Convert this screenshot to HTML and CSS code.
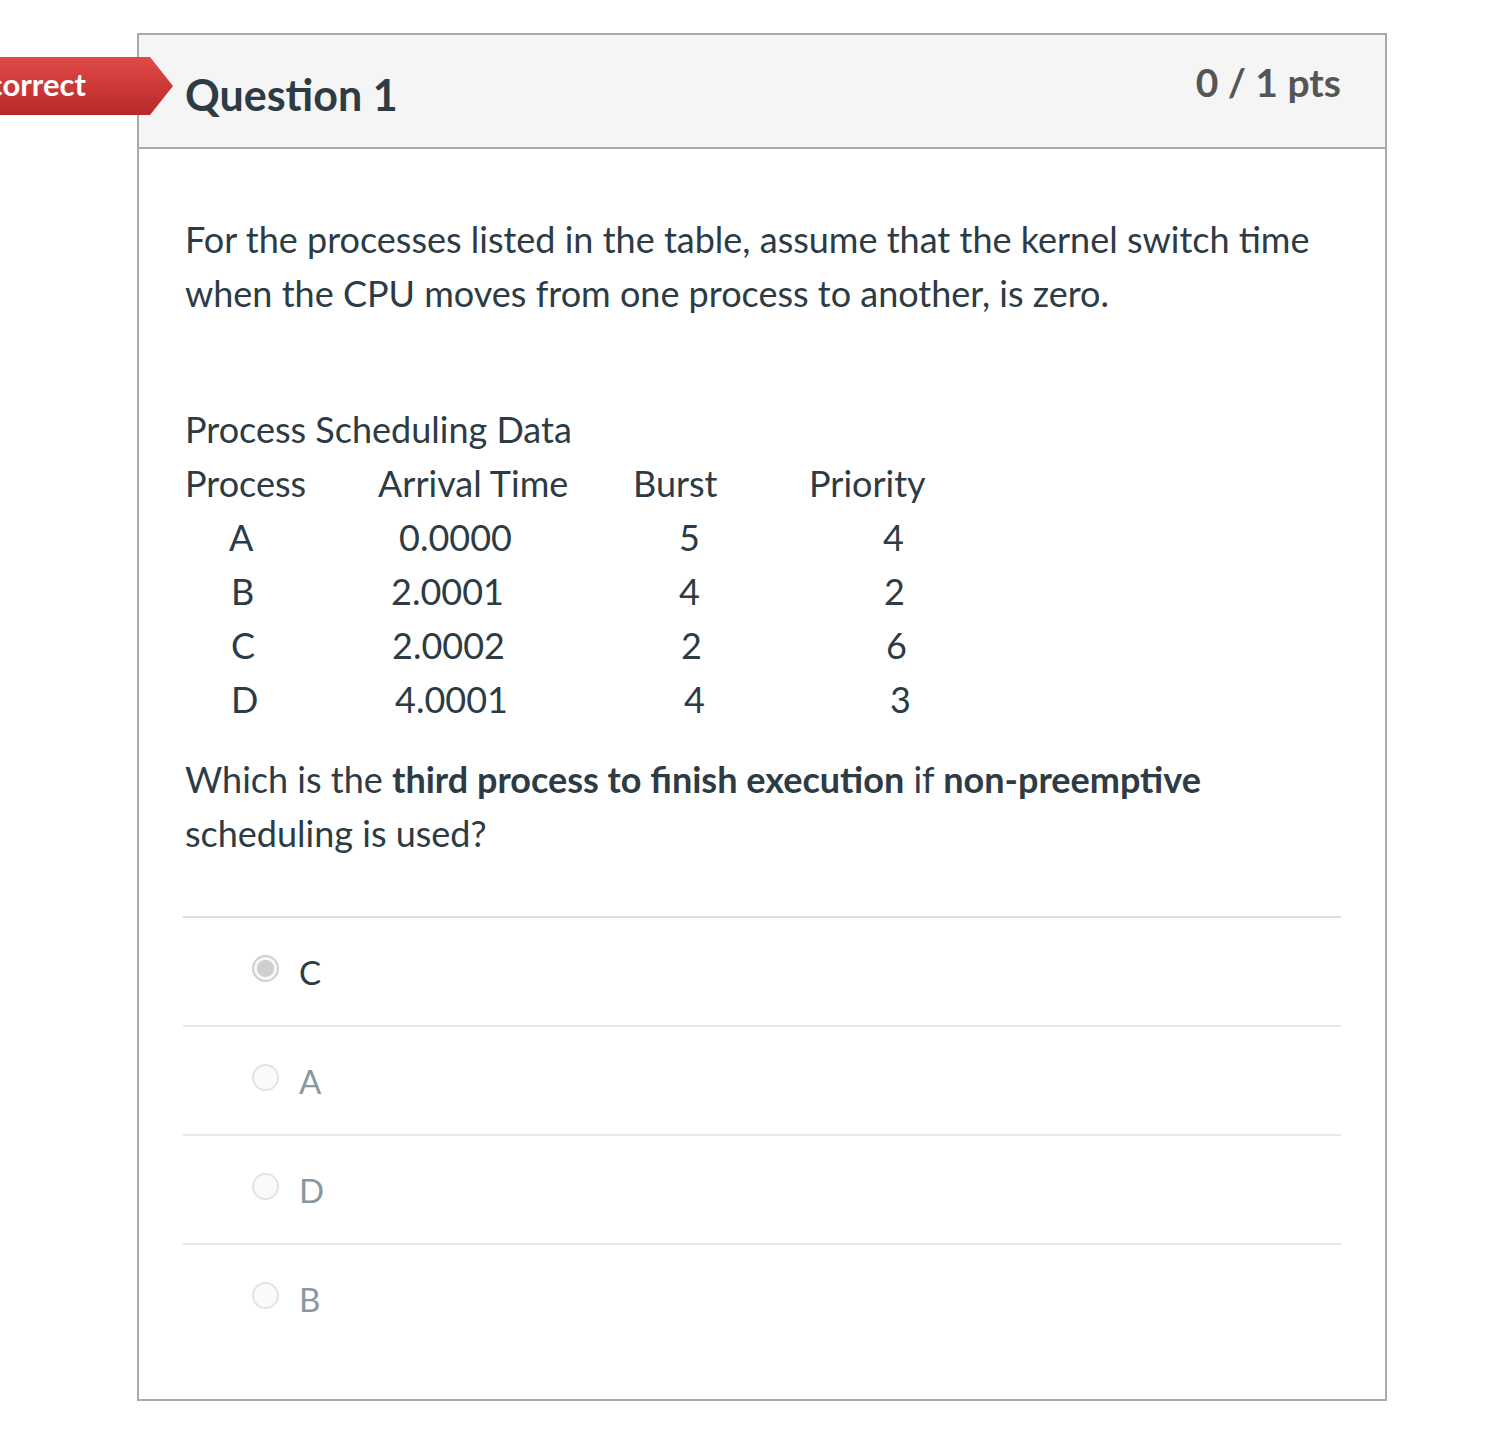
FILE: index.html
```html
<!DOCTYPE html>
<html lang="en">
<head>
<meta charset="utf-8">
<title>Question 1</title>
<link rel="stylesheet" href="styles.css">
</head>
<body>
<div class="page">
  <div class="badge"><span>Incorrect</span></div>
  <div class="card">
    <div class="card-header">
      <h2 class="title">Question 1</h2>
      <div class="pts">0 / 1 pts</div>
    </div>
    <div class="card-body">
      <p class="intro">For the processes listed in the table, assume that the kernel switch time when the CPU moves from one process to another, is zero.</p>
      <div class="caption">Process Scheduling Data</div>
      <div class="sched">
        <div class="h">Process</div><div class="h">Arrival Time</div><div class="h">Burst</div><div class="h">Priority</div>
        <div class="c1">A</div><div class="c2 a0">0.0000</div><div class="c3">5</div><div class="c4">4</div>
        <div class="c1 b">B</div><div class="c2">2.0001</div><div class="c3">4</div><div class="c4 b">2</div>
        <div class="c1 b">C</div><div class="c2 c">2.0002</div><div class="c3 c">2</div><div class="c4 c">6</div>
        <div class="c1 d">D</div><div class="c2 d">4.0001</div><div class="c3 d">4</div><div class="c4 d">3</div>
      </div>
      <p class="ask">Which is the <strong>third process to finish execution</strong> if <strong>non-preemptive</strong> scheduling is used?</p>
      <div class="answers">
        <div class="answer first selected"><span class="radio"></span><span class="label">C</span></div>
        <div class="answer"><span class="radio"></span><span class="label">A</span></div>
        <div class="answer"><span class="radio"></span><span class="label">D</span></div>
        <div class="answer"><span class="radio"></span><span class="label">B</span></div>
      </div>
    </div>
  </div>
</div>
</body>
</html>
```
FILE: styles.css
```css
* { box-sizing: border-box; }
html, body { margin: 0; padding: 0; background: #fff; }
body {
  font-family: Lato, "Open Sans", "Liberation Sans", sans-serif;
  color: #2d3b45;
}
.page {
  position: relative;
  padding: 33px 0 40px 137px;
}
.card {
  width: 1250px;
  border: 2px solid #aaaaaa;
  background: #fff;
}
.card-header {
  height: 114px;
  background: #f5f5f5;
  border-bottom: 2px solid #aaaaaa;
  display: flex;
  justify-content: space-between;
  padding: 0 44px 0 46px;
}
.title {
  margin: 0;
  font-size: 43px;
  font-weight: 700;
  line-height: 1;
  padding-top: 38px;
  color: #2d3b45;
}
.pts {
  font-size: 39px;
  font-weight: 700;
  color: #555555;
  line-height: 1;
  padding-top: 28px;
}
.card-body {
  padding: 63px 44px 47px 46px;
  font-size: 36px;
  line-height: 54px;
}
.intro { margin: 0 0 82px; }
.sched {
  display: grid;
  grid-template-columns: 193px 255px 176px 200px;
}
.c1 { padding-left: 44px; }
.c1.b { padding-left: 46px; }
.c1.d { padding-left: 46px; }
.c2 { padding-left: 13px; }
.c2.a0 { padding-left: 21px; }
.c2.c { padding-left: 14px; }
.c2.d { padding-left: 17px; }
.c3 { padding-left: 46px; }
.c3.c { padding-left: 48px; }
.c3.d { padding-left: 51px; }
.c4 { padding-left: 74px; }
.c4.b { padding-left: 75px; }
.c4.c { padding-left: 77px; }
.c4.d { padding-left: 81px; }
.ask { margin: 26px 0 56px; }
.ask strong { font-weight: 700; color: #2d3b45; }
.answers { margin-left: -2px; }
.answer {
  height: 109px;
  border-top: 2px solid #e8e8e8;
  display: flex;
  align-items: center;
  padding-left: 69px;
  padding-top: 1px;
  color: #8b969e;
}
.answer.first { border-top-color: #dddddd; }
.answer.selected { color: #2d3b45; }
.radio {
  width: 27px;
  height: 27px;
  border-radius: 50%;
  border: 2px solid #e3e3e3;
  background: #fafafa;
  margin-right: 20px;
  margin-top: -7px;
  flex: none;
}
.selected .radio {
  border: 2px solid #cfcfcf;
  background: radial-gradient(circle, #cfcfcf 0 8px, #f7f7f7 9px);
}
.label { font-size: 33px; line-height: 1; }
.badge {
  position: absolute;
  left: 0;
  top: 57px;
  width: 173px;
  height: 58px;
  background: linear-gradient(#e24a47, #b72828);
  clip-path: polygon(0 0, 150px 0, 173px 29px, 150px 58px, 0 58px);
  overflow: hidden;
}
.badge span {
  position: absolute;
  right: 87px;
  top: 8px;
  font-size: 31px;
  font-weight: 700;
  color: #fff;
  line-height: 38px;
  white-space: nowrap;
}
```
